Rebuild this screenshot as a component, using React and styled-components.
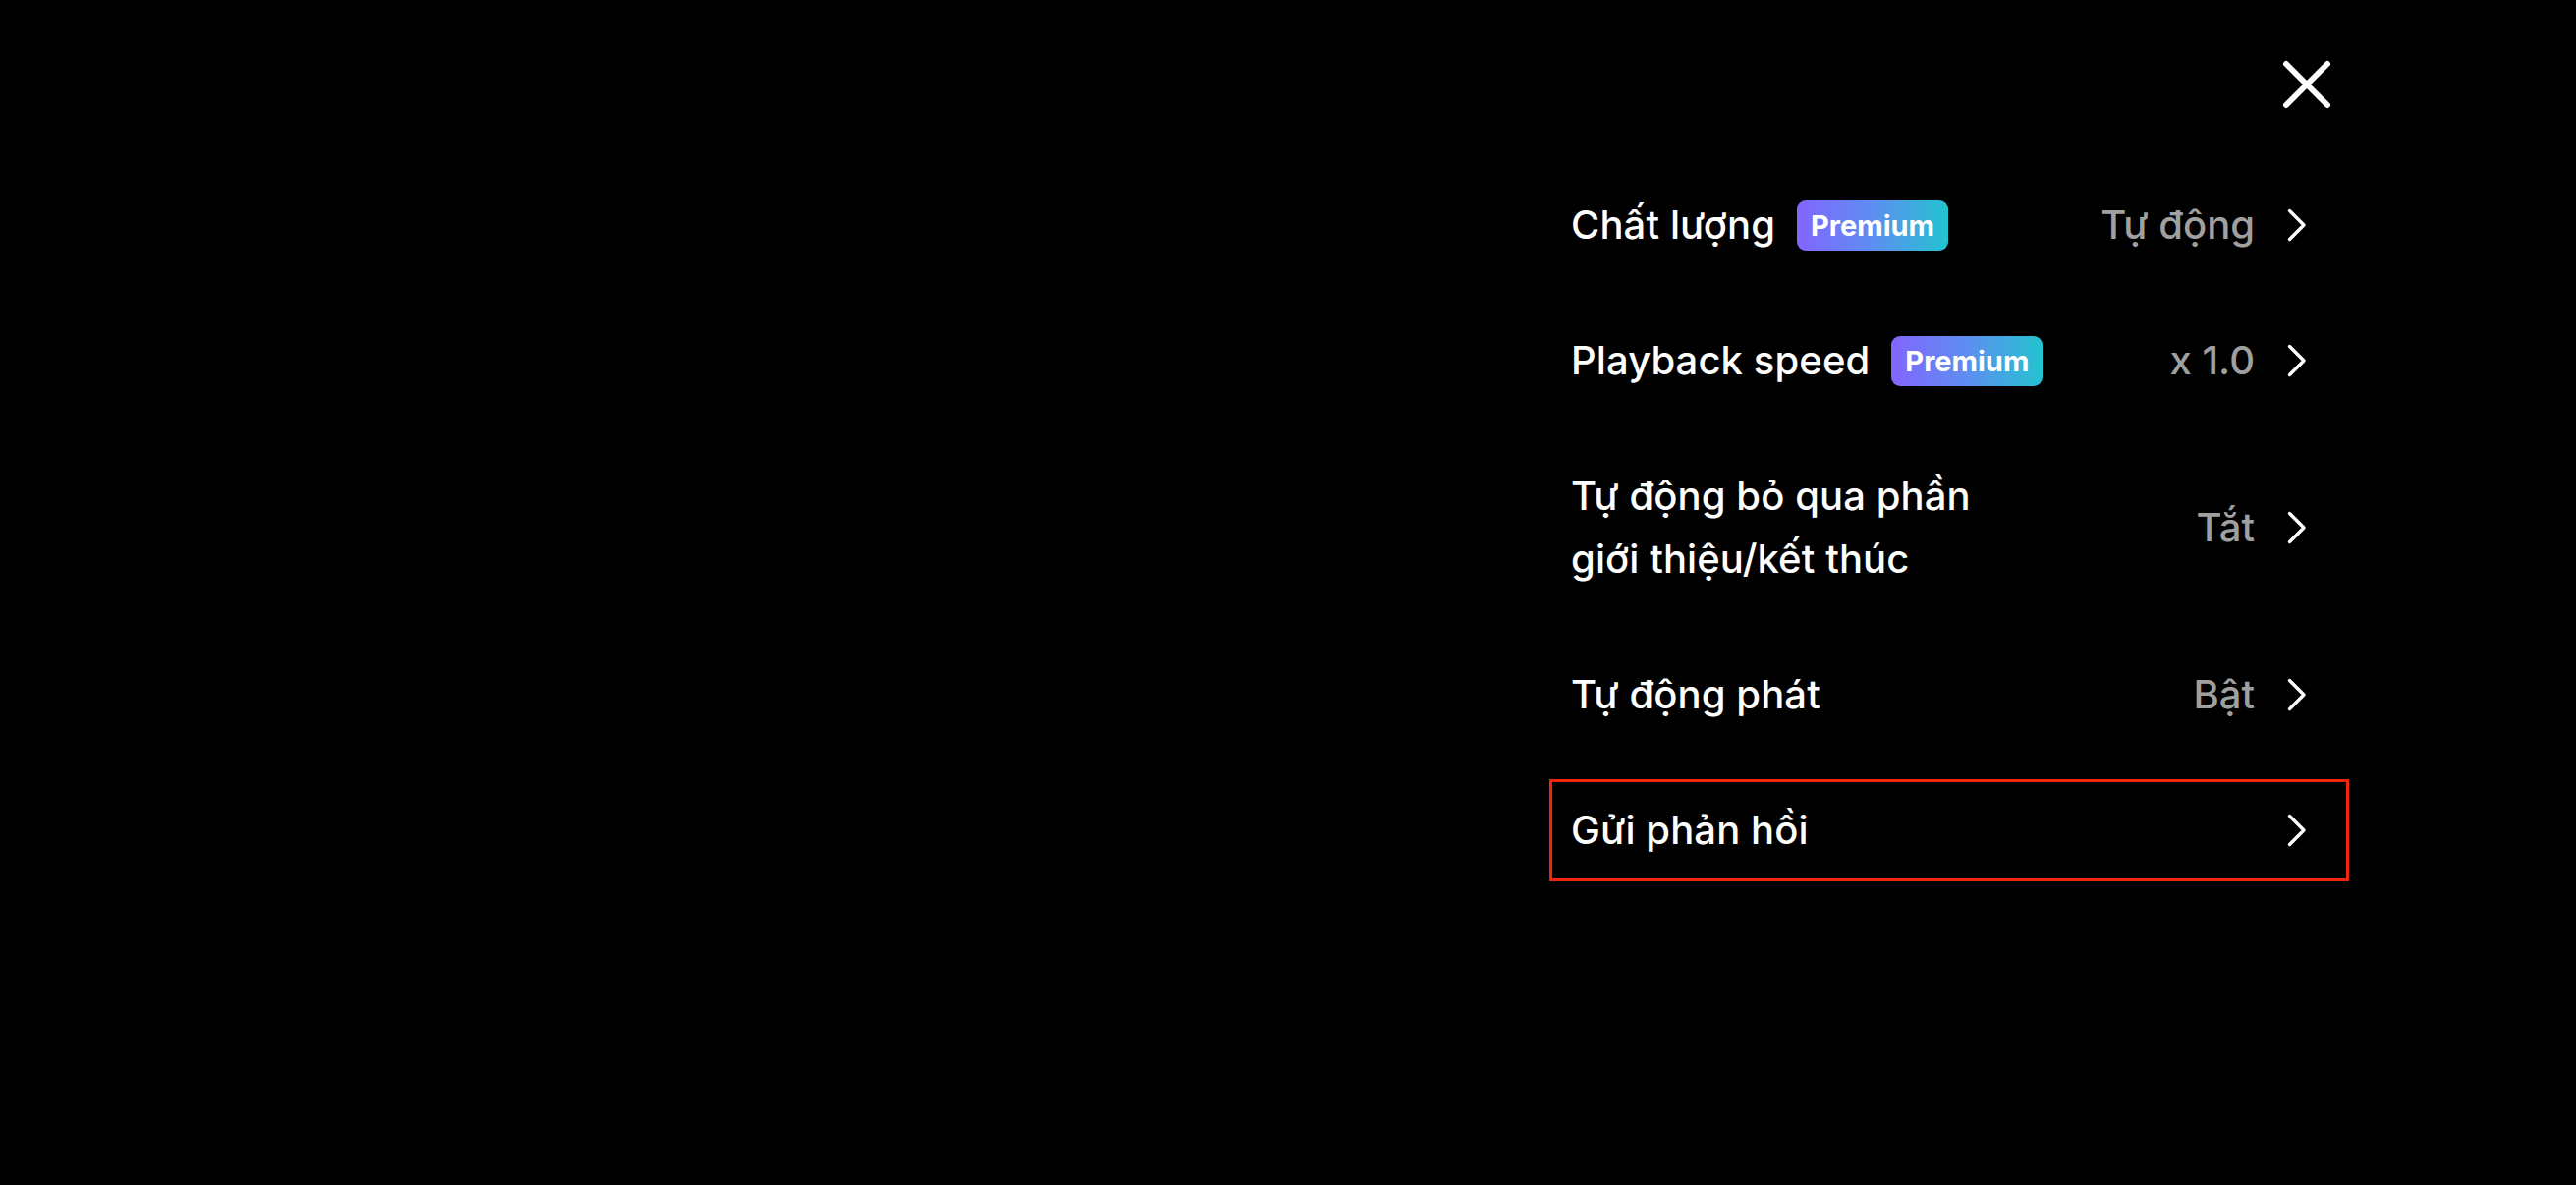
import React from "react";
import styled, { createGlobalStyle } from "styled-components";

const GlobalStyle = createGlobalStyle`
  html, body {
    margin: 0;
    padding: 0;
    background: #000;
  }
  body {
    font-family: Inter, "Noto Sans", "Liberation Sans", sans-serif;
    color: #fff;
  }
`;

const Page = styled.div`
  width: 100%;
  height: 1206px;
  background: #000;
  display: flex;
  justify-content: flex-end;
  overflow: hidden;
`;

const Panel = styled.div`
  width: 814px;
  margin-right: 231px;
  padding-top: 61px;
  display: flex;
  flex-direction: column;
`;

const Header = styled.div`
  display: flex;
  justify-content: flex-end;
  padding-right: 18px;
`;

const CloseButton = styled.button`
  width: 50px;
  height: 50px;
  padding: 0;
  border: none;
  background: none;
  display: flex;
  align-items: center;
  justify-content: center;
  cursor: pointer;
`;

const List = styled.div`
  margin-top: 66px;
  display: flex;
  flex-direction: column;
  gap: 34px;
`;

const Row = styled.div`
  box-sizing: border-box;
  min-height: 104px;
  padding: 17px 40px 17px 19px;
  border: 3px solid ${props => (props.selected ? "#f2260f" : "transparent")};
  display: flex;
  align-items: center;
  cursor: pointer;
`;

const TitleGroup = styled.div`
  flex: 1;
  display: flex;
  align-items: center;
  gap: 22px;
`;

const Title = styled.span`
  max-width: 470px;
  font-size: 40px;
  line-height: 64px;
  font-weight: 500;
  letter-spacing: 0.1px;
  color: #fff;
`;

const Badge = styled.span`
  height: 51px;
  padding: 0 14px;
  border-radius: 9px;
  background: linear-gradient(90deg, #8166ff 0%, #5e8ef0 50%, #22c4d0 100%);
  display: flex;
  align-items: center;
  font-size: 29px;
  font-weight: 700;
  color: #fff;
`;

const Value = styled.span`
  font-size: 40px;
  line-height: 64px;
  font-weight: 500;
  color: #a0a0a0;
  margin-right: 33px;
`;

const Chevron = () => (
  <svg width="20" height="34" viewBox="0 0 20 34" fill="none">
    <path
      d="M2.5 2.5 L17 17 L2.5 31.5"
      stroke="#fff"
      strokeWidth="3.4"
      strokeLinecap="round"
      strokeLinejoin="round"
    />
  </svg>
);

const CloseIcon = () => (
  <svg width="50" height="50" viewBox="0 0 50 50" fill="none">
    <path
      d="M4 4 L46 46 M46 4 L4 46"
      stroke="#fff"
      strokeWidth="6"
      strokeLinecap="round"
    />
  </svg>
);

const items = [
  { title: "Chất lượng", premium: true, value: "Tự động" },
  { title: "Playback speed", premium: true, value: "x 1.0" },
  { title: "Tự động bỏ qua phần giới thiệu/kết thúc", value: "Tắt" },
  { title: "Tự động phát", value: "Bật" },
  { title: "Gửi phản hồi", selected: true },
];

export default function App() {
  return (
    <>
      <GlobalStyle />
      <Page>
        <Panel>
          <Header>
            <CloseButton aria-label="Đóng">
              <CloseIcon />
            </CloseButton>
          </Header>
          <List>
            {items.map(item => (
              <Row key={item.title} selected={item.selected}>
                <TitleGroup>
                  <Title>{item.title}</Title>
                  {item.premium && <Badge>Premium</Badge>}
                </TitleGroup>
                {item.value && <Value>{item.value}</Value>}
                <Chevron />
              </Row>
            ))}
          </List>
        </Panel>
      </Page>
    </>
  );
}
